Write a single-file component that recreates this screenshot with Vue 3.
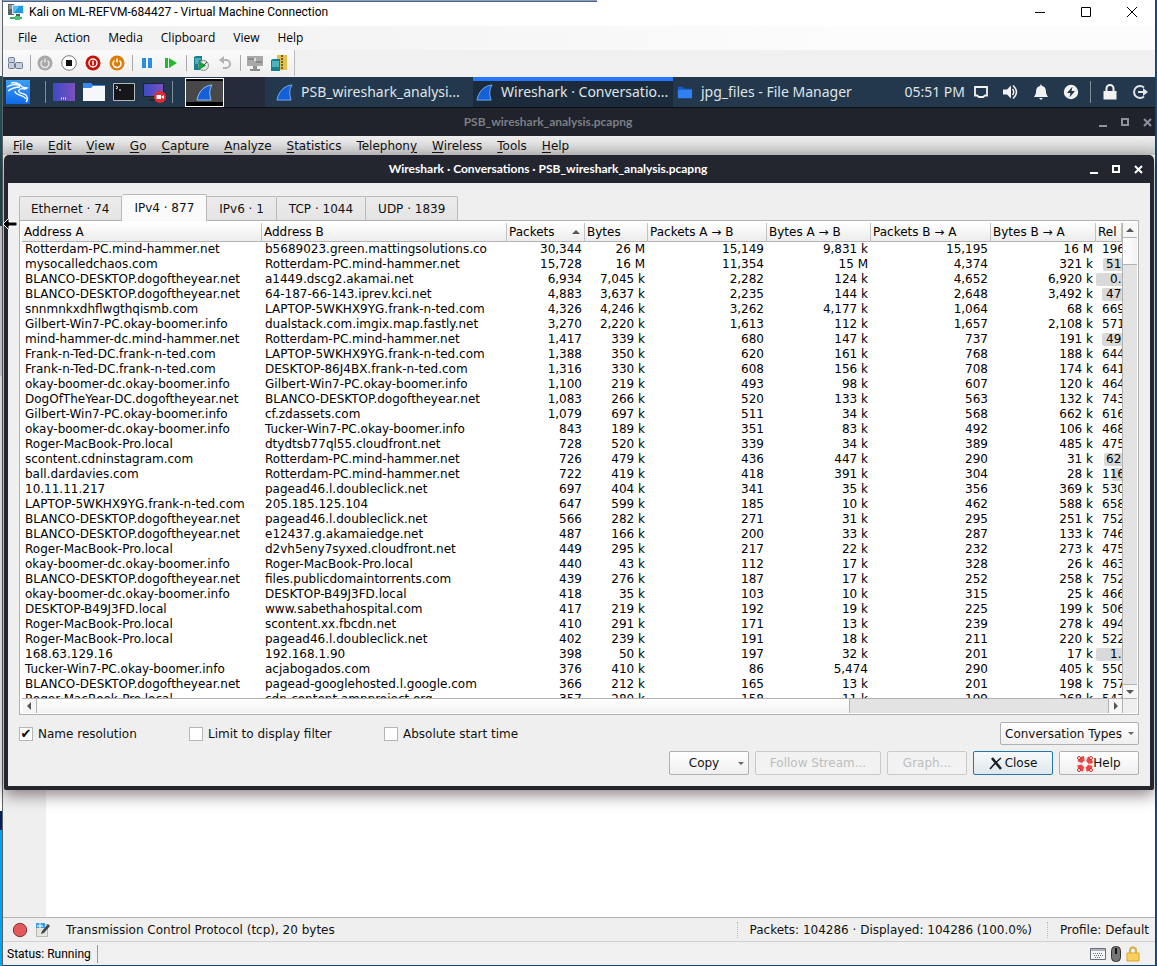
<script setup>
const winMenu = ['File', 'Action', 'Media', 'Clipboard', 'View', 'Help']
const appMenu = [
  ['', 'F', 'ile'], ['', 'E', 'dit'], ['', 'V', 'iew'], ['', 'G', 'o'], ['', 'C', 'apture'], ['', 'A', 'nalyze'],
  ['', 'S', 'tatistics'], ['Telephon', 'y', ''], ['', 'W', 'ireless'], ['', 'T', 'ools'], ['', 'H', 'elp'],
]
const tabs = ['Ethernet · 74', 'IPv4 · 877', 'IPv6 · 1', 'TCP · 1044', 'UDP · 1839']
const columns = ['Address A', 'Address B', 'Packets', 'Bytes', 'Packets A → B', 'Bytes A → B', 'Packets B → A', 'Bytes B → A', 'Rel Start']
const barStart = { '51': 7, '0.': 0, '47': 6, '49': 6, '62': 8, '116': 16, '1.': 0 }
const indent = (s) => 'c' + s.replace('.', '').length
const rows = `Rotterdam-PC.mind-hammer.net|b5689023.green.mattingsolutions.co|30,344|26 M|15,149|9,831 k|15,195|16 M|196
mysocalledchaos.com|Rotterdam-PC.mind-hammer.net|15,728|16 M|11,354|15 M|4,374|321 k|51
BLANCO-DESKTOP.dogoftheyear.net|a1449.dscg2.akamai.net|6,934|7,045 k|2,282|124 k|4,652|6,920 k|0.
BLANCO-DESKTOP.dogoftheyear.net|64-187-66-143.iprev.kci.net|4,883|3,637 k|2,235|144 k|2,648|3,492 k|47
snnmnkxdhflwgthqismb.com|LAPTOP-5WKHX9YG.frank-n-ted.com|4,326|4,246 k|3,262|4,177 k|1,064|68 k|669
Gilbert-Win7-PC.okay-boomer.info|dualstack.com.imgix.map.fastly.net|3,270|2,220 k|1,613|112 k|1,657|2,108 k|571
mind-hammer-dc.mind-hammer.net|Rotterdam-PC.mind-hammer.net|1,417|339 k|680|147 k|737|191 k|49
Frank-n-Ted-DC.frank-n-ted.com|LAPTOP-5WKHX9YG.frank-n-ted.com|1,388|350 k|620|161 k|768|188 k|644
Frank-n-Ted-DC.frank-n-ted.com|DESKTOP-86J4BX.frank-n-ted.com|1,316|330 k|608|156 k|708|174 k|641
okay-boomer-dc.okay-boomer.info|Gilbert-Win7-PC.okay-boomer.info|1,100|219 k|493|98 k|607|120 k|464
DogOfTheYear-DC.dogoftheyear.net|BLANCO-DESKTOP.dogoftheyear.net|1,083|266 k|520|133 k|563|132 k|743
Gilbert-Win7-PC.okay-boomer.info|cf.zdassets.com|1,079|697 k|511|34 k|568|662 k|616
okay-boomer-dc.okay-boomer.info|Tucker-Win7-PC.okay-boomer.info|843|189 k|351|83 k|492|106 k|468
Roger-MacBook-Pro.local|dtydtsb77ql55.cloudfront.net|728|520 k|339|34 k|389|485 k|475
scontent.cdninstagram.com|Rotterdam-PC.mind-hammer.net|726|479 k|436|447 k|290|31 k|62
ball.dardavies.com|Rotterdam-PC.mind-hammer.net|722|419 k|418|391 k|304|28 k|116
10.11.11.217|pagead46.l.doubleclick.net|697|404 k|341|35 k|356|369 k|530
LAPTOP-5WKHX9YG.frank-n-ted.com|205.185.125.104|647|599 k|185|10 k|462|588 k|658
BLANCO-DESKTOP.dogoftheyear.net|pagead46.l.doubleclick.net|566|282 k|271|31 k|295|251 k|752
BLANCO-DESKTOP.dogoftheyear.net|e12437.g.akamaiedge.net|487|166 k|200|33 k|287|133 k|746
Roger-MacBook-Pro.local|d2vh5eny7syxed.cloudfront.net|449|295 k|217|22 k|232|273 k|475
okay-boomer-dc.okay-boomer.info|Roger-MacBook-Pro.local|440|43 k|112|17 k|328|26 k|463
BLANCO-DESKTOP.dogoftheyear.net|files.publicdomaintorrents.com|439|276 k|187|17 k|252|258 k|752
okay-boomer-dc.okay-boomer.info|DESKTOP-B49J3FD.local|418|35 k|103|10 k|315|25 k|466
DESKTOP-B49J3FD.local|www.sabethahospital.com|417|219 k|192|19 k|225|199 k|506
Roger-MacBook-Pro.local|scontent.xx.fbcdn.net|410|291 k|171|13 k|239|278 k|494
Roger-MacBook-Pro.local|pagead46.l.doubleclick.net|402|239 k|191|18 k|211|220 k|522
168.63.129.16|192.168.1.90|398|50 k|197|32 k|201|17 k|1.
Tucker-Win7-PC.okay-boomer.info|acjabogados.com|376|410 k|86|5,474|290|405 k|550
BLANCO-DESKTOP.dogoftheyear.net|pagead-googlehosted.l.google.com|366|212 k|165|13 k|201|198 k|757
Roger-MacBook-Pro.local|cdn-content.ampproject.org|357|280 k|158|11 k|199|268 k|547`.split('\n').map((l) => l.split('|'))
</script>

<template>
  <div class="desktop">
    <div class="behind"><i class="b1"></i><i class="b0"></i><i class="b2"></i><i class="b3"></i><i class="b4"></i></div>
    <div class="vm">
      <header class="vm-title">
        <svg class="i16" viewBox="0 0 16 16"><path d="M0 0h6v11H0z" fill="#5a6268" /><path d="M1 2h4M1 4h4" stroke="#c3cbd0" /><path d="M4 1h12v9H4z" fill="#d5e8f2" /><path d="M5 2h10v7H5z" fill="#1d9be0" /><path d="M5 2h6L6 9H5z" fill="#56c1f5" /><path d="M8 10h4v3H8z" fill="#4d5a60" /><path d="M2 13h12v2H2z" fill="#33b05a" /><path d="M7 12h5v4H7z" fill="#4cc274" /></svg>
        <h1>Kali on ML-REFVM-684427 - Virtual Machine Connection</h1>
        <div class="vm-controls">
          <button aria-label="Minimize"><svg class="i12" viewBox="0 0 12 12"><path d="M1 6.500h10" stroke="#000" /></svg></button>
          <button aria-label="Maximize"><svg class="i12" viewBox="0 0 12 12"><path d="M1.500 1.500h9v9h-9z" fill="none" stroke="#000" /></svg></button>
          <button aria-label="Close window"><svg class="i12" viewBox="0 0 12 12"><path d="M1 1l10 10M11 1L1 11" stroke="#000" /></svg></button>
        </div>
      </header>
      <nav class="vm-menu"><button v-for="m in winMenu" :key="m">{{ m }}</button></nav>
      <div class="vm-tools">
        <div class="tools-strip">
          <button aria-label="Ctrl+Alt+Delete"><svg class="i16" viewBox="0 0 16 16"><g fill="#c6cfdd" stroke="#6d7b94"><rect x="1.500" y="2.500" width="6" height="5" rx="1" /><rect x="1.500" y="7.500" width="6" height="6" rx="1" /><rect x="8.500" y="7.500" width="7" height="6" rx="1" /></g></svg></button>
          <span class="tsep"></span>
          <button aria-label="Start"><svg class="i16" viewBox="0 0 16 16"><circle cx="8" cy="8" r="7.500" fill="#a8a8a8" /><path d="M5.500 5.500a4 4 0 1 0 5 0M8 3.500v4" fill="none" stroke="#e6e6e6" stroke-width="1.500" /></svg></button>
          <button aria-label="Turn off"><svg class="i16" viewBox="0 0 16 16"><circle cx="8" cy="8" r="7.300" fill="#fff" stroke="#777" /><path d="M5 5h6v6H5z" fill="#111" /></svg></button>
          <button aria-label="Shut down"><svg class="i16" viewBox="0 0 16 16"><circle cx="8" cy="8" r="7.500" fill="#c4120c" /><circle cx="8" cy="8" r="4" fill="none" stroke="#fff" stroke-width="1.400" /><path d="M8 5.800v4.400" stroke="#fff" stroke-width="1.500" /></svg></button>
          <button aria-label="Save"><svg class="i16" viewBox="0 0 16 16"><circle cx="8" cy="8" r="7.500" fill="#dc7d0a" /><path d="M5.500 5.500a4 4 0 1 0 5 0M8 3.500v4" fill="none" stroke="#fff" stroke-width="1.500" /></svg></button>
          <span class="tsep"></span>
          <button aria-label="Pause"><svg class="i16" viewBox="0 0 16 16"><path d="M3 3h4v10H3zM9 3h4v10H9z" fill="#2b8de0" /></svg></button>
          <button aria-label="Reset"><svg class="i16" viewBox="0 0 16 16"><path d="M2 3h3v10H2zM6 3l8 5-8 5z" fill="#1ebb2c" /></svg></button>
          <span class="tsep"></span>
          <button aria-label="Checkpoint"><svg class="i16" viewBox="0 0 16 16"><path d="M1 2l2-1h6v4L8 15H1z" fill="#177f8e" /><path d="M2 4h6M2 6h4M2 8h3" stroke="#8edbe4" /><circle cx="10.500" cy="10.500" r="5" fill="#e2e6e6" stroke="#848c8c" /><path d="M6 6l7 4.500L6 15z" fill="#14a53a" /><path d="M10 11l4-4" stroke="#444" /></svg></button>
          <button aria-label="Revert"><svg class="i16" viewBox="0 0 16 16"><path d="M4 5h5a4 4 0 0 1 0 8H6" fill="none" stroke="#b3b3b3" stroke-width="2" /><path d="M7 1v8L2 5z" fill="#b3b3b3" /></svg></button>
          <span class="tsep"></span>
          <button aria-label="Enhanced session"><svg class="i16" viewBox="0 0 16 16"><path d="M0 1h16v10H0z" fill="#a9a9a9" /><path d="M6 11h4v3H6z" fill="#929292" /><path d="M3 15h10M1 4h6M9 7h6" stroke="#8b8b8b" stroke-width="2" /><path d="M7 3h2v3H7z" fill="#dedede" /></svg></button>
          <button aria-label="Share"><svg class="i16" viewBox="0 0 16 16"><path d="M6 0h10v15H6z" fill="#e6c04c" /><path d="M11 0v15" stroke="#725d23" stroke-width="2" stroke-dasharray="2 1" /><path d="M0 5l2-1h7v12H0z" fill="#0f8192" /><path d="M1 7h7M1 9h7M1 11h7" stroke="#90e2ea" /></svg></button>
        </div>
      </div>

      <main class="guest">
        <div class="panel">
          <button class="kali" aria-label="Applications"><svg width="24" height="24" viewBox="0 0 24 24"><defs><linearGradient id="kg" x2="0" y2="1"><stop stop-color="#3aa0f8" /><stop offset="1" stop-color="#1168e8" /></linearGradient></defs><path d="M0 0h24v24H0z" fill="url(#kg)" /><path d="M1 7c5-3 9-3 13-1M2 11c4-3 8-4 12-4M5 3c6-1 9 1 11 4l5 1-2 1c-4-1-7 0-6 3 1 2 7 1 8 5 1 2 0 4-1 5M9 11c0 5 8 3 11 8" fill="none" stroke="#fff" stroke-width="1.300" /></svg></button>
          <span class="psep"></span>
          <div class="launch">
            <button aria-label="Show desktop"><svg class="i24" viewBox="0 0 24 24"><defs><linearGradient id="sg"><stop stop-color="#3c4bc4" /><stop offset="1" stop-color="#7d4fc0" /></linearGradient></defs><path d="M1 3h22v18H1z" fill="url(#sg)" /><path d="M9 18.500h6" stroke="#dfe3ff" stroke-dasharray="1 1" stroke-width="2" /></svg></button>
            <button aria-label="Files"><svg class="i24" viewBox="0 0 24 24"><path d="M1 3h8l2 2h12v6H1z" fill="#3b86ee" /><path d="M1 8h8l2-2h12v15H1z" fill="#f6f7f8" /></svg></button>
            <button aria-label="Terminal"><svg class="i24" viewBox="0 0 24 24"><path d="M1.500 3.500h21v17h-21z" fill="#15171a" stroke="#b5b8ba" /><path d="M4 6l2 1.500L4 9M7 10h2" fill="none" stroke="#fff" /></svg></button>
            <button aria-label="Recorder"><svg class="i24" viewBox="0 0 24 24"><path d="M1 3h21v14H1z" fill="#20242c" /><path d="M2 4h19v12H2z" fill="url(#sg)" /><path d="M7 19h9v2H7z" fill="#222831" /><circle cx="18" cy="17" r="6" fill="#e02c36" /><path d="M14.500 15h4.500v4h-4.500zM19 17l3-2v4z" fill="#fff" /></svg></button>
          </div>
          <span class="psep"></span>
          <button class="pager" aria-label="Workspace 1"><svg width="17" height="17" viewBox="0 0 18 18"><path d="M1 17C3 8 8 2 17 1c-3 5-3 10-1 16z" fill="#155fd8" stroke="#9dc6f5" /></svg></button>
          <div class="pager-rest"></div>
          <div class="tasks">
            <button class="task"><svg class="fin" viewBox="0 0 18 18"><path d="M1 17C3 8 8 2 17 1c-3 5-3 10-1 16z" fill="#155fd8" stroke="#76b0f2" /></svg><span>PSB_wireshark_analysi...</span></button>
            <button class="task active"><svg class="fin" viewBox="0 0 18 18"><path d="M1 17C3 8 8 2 17 1c-3 5-3 10-1 16z" fill="#155fd8" stroke="#76b0f2" /></svg><span>Wireshark · Conversatio...</span></button>
            <button class="task"><svg class="fin" viewBox="0 0 18 18"><path d="M2 3h5l2 2h8v10H2z" fill="#1558c8" /><path d="M2 6h15v9H2z" fill="#2f80f0" /></svg><span>jpg_files - File Manager</span></button>
          </div>
          <div class="tray">
            <time>05:51 PM</time>
            <svg class="i16" viewBox="0 0 16 16"><path d="M2 3h12v8.500h-2L10 13H6l-2-1.500H2z" fill="none" stroke="#f2f2f2" stroke-width="1.800" /></svg>
            <svg class="i16" viewBox="0 0 16 16"><path d="M0 5.500h4l4-4v13l-4-4H0z" fill="#f2f2f2" /><path d="M9.500 5q2.500 3 0 6M10 1.500q7 6.500 0 13" fill="none" stroke="#f2f2f2" stroke-width="1.500" /></svg>
            <svg class="i16" viewBox="0 0 16 16"><path d="M8 0l1 2c3 .5 4 3 4 6 0 2 1 3 2 5H1c1-2 2-3 2-5 0-3 1-5.500 4-6zM6 14h4l-2 2z" fill="#f2f2f2" /></svg>
            <svg class="i16" viewBox="0 0 16 16"><circle cx="8" cy="8" r="7.200" fill="#f2f2f2" /><path d="M9.500 2.500L4 9h3.500L6.500 13.500 12 7H8.500z" fill="#223447" /></svg>
            <span class="psep"></span>
            <svg class="i16" viewBox="0 0 16 16"><path d="M1.500 7h13v8.500h-13z" fill="#f2f2f2" /><path d="M4.500 8V4.500a3.500 3.500 0 0 1 7 0V8" fill="none" stroke="#f2f2f2" stroke-width="2" /></svg>
            <svg class="i16" viewBox="0 0 16 16"><path d="M12 3.500A6 6 0 1 0 12 12.500" fill="none" stroke="#e4e4e4" stroke-width="2" /><path d="M6 8h6" stroke="#e4e4e4" stroke-width="2" /><path d="M11 4l5 4-5 4z" fill="#e4e4e4" /></svg>
          </div>
        </div>

        <section class="app">
          <div class="titlebar dim"><h2>PSB_wireshark_analysis.pcapng</h2>
            <div class="wm"><button aria-label="Minimize capture"><svg class="i9" viewBox="0 0 9 9"><path d="M0 7h8v2H0z" /></svg></button><button aria-label="Maximize capture"><svg class="i9" viewBox="0 0 9 9"><path d="M0 0h8v8H0zM2 2v4h4V2z" fill-rule="evenodd" /></svg></button><button aria-label="Close capture"><svg class="i9" viewBox="0 0 9 9"><path d="M1 1l7 7M8 1L1 8" class="x" /></svg></button></div>
          </div>
          <nav class="app-menu"><button v-for="m in appMenu" :key="m.join('')">{{ m[0] }}<u>{{ m[1] }}</u>{{ m[2] }}</button></nav>
          <div class="app-body"><div class="gutter"></div><div class="bytes"></div></div>
          <footer class="app-status">
            <svg class="i16" viewBox="0 0 16 16"><circle cx="8" cy="8" r="6.700" fill="#e2595c" stroke="#863438" /></svg>
            <svg class="i16" viewBox="0 0 16 16"><path d="M1.500 2.500h11v12h-11z" fill="#e6e6df" stroke="#b9b9b0" /><path d="M1 1h9v5H1z" fill="#3da0dc" /><path d="M5 1v5M2 4h6" stroke="#fff" /><path d="M13 2L7 9l-1 3 3-1 6-7z" fill="#414950" /></svg>
            <span class="msg">Transmission Control Protocol (tcp), 20 bytes</span>
            <span class="cnt">Packets: 104286 · Displayed: 104286 (100.0%)</span>
            <span class="prof">Profile: Default</span>
          </footer>
        </section>

        <section class="dialog" role="dialog" aria-labelledby="dlg-title">
          <div class="titlebar"><h2 id="dlg-title">Wireshark · Conversations · PSB_wireshark_analysis.pcapng</h2>
            <div class="wm"><button aria-label="Minimize"><svg class="i9" viewBox="0 0 9 9"><path d="M0 7h8v2H0z" /></svg></button><button aria-label="Maximize"><svg class="i9" viewBox="0 0 9 9"><path d="M0 0h8v8H0zM2 2v4h4V2z" fill-rule="evenodd" /></svg></button><button aria-label="Close dialog"><svg class="i9" viewBox="0 0 9 9"><path d="M1 1l7 7M8 1L1 8" class="x" /></svg></button></div>
          </div>
          <div class="dialog-body">
            <div class="tabs" role="tablist"><button v-for="(t, i) in tabs" :key="t" role="tab" :aria-selected="i === 1" :class="{ on: i === 1 }">{{ t }}</button></div>
            <div class="frame">
              <div class="view">
                <table>
                  <colgroup><col v-for="(c, i) in columns" :key="c" :class="'w' + i" /></colgroup>
                  <thead><tr><th v-for="(c, i) in columns" :key="c" scope="col"><div>{{ c }}<svg v-if="i === 2" width="8" height="4" viewBox="0 0 8 4"><path d="M0 4L4 0l4 4z" fill="#555" /></svg></div></th></tr></thead>
                  <tbody>
                    <tr v-for="(r, n) in rows" :key="n">
                      <td v-for="c in 8" :key="c">{{ r[c - 1] }}</td>
                      <td class="rel" :class="indent(r[8])"><span v-if="r[8] in barStart" class="bar" :style="{ left: barStart[r[8]] + 'px' }"></span><span class="val">{{ r[8] }}</span></td>
                    </tr>
                  </tbody>
                </table>
              </div>
              <div class="vbar"><button aria-label="Scroll up"><svg width="8" height="4" viewBox="0 0 8 4"><path d="M0 4L4 0l4 4z" /></svg></button><div class="vthumb"></div><div class="track"></div><button aria-label="Scroll down"><svg width="8" height="4" viewBox="0 0 8 4"><path d="M0 0l4 4 4-4z" /></svg></button></div>
              <div class="hbar"><button aria-label="Scroll left"><svg width="4" height="8" viewBox="0 0 4 8"><path d="M4 0L0 4l4 4z" /></svg></button><div class="hthumb"></div><div class="track"></div><button aria-label="Scroll right"><svg width="4" height="8" viewBox="0 0 4 8"><path d="M0 0l4 4-4 4z" /></svg></button></div>
              <div class="corner"></div>
            </div>
            <div class="options">
              <label class="o1"><input type="checkbox" checked />Name resolution</label>
              <label class="o2"><input type="checkbox" />Limit to display filter</label>
              <label><input type="checkbox" />Absolute start time</label>
              <button class="btn types" aria-haspopup="menu">Conversation Types<svg width="6" height="4" viewBox="0 0 6 4"><path d="M0 0l3 3 3-3z" fill="#666" /></svg></button>
            </div>
            <div class="actions">
              <button class="btn copy" aria-haspopup="menu"><span>Copy</span><svg width="6" height="4" viewBox="0 0 6 4"><path d="M0 0l3 3 3-3z" fill="#666" /></svg></button>
              <button class="btn wide" disabled>Follow Stream...</button>
              <button class="btn" disabled>Graph...</button>
              <button class="btn primary"><svg width="14" height="14" viewBox="0 0 14 14"><path d="M3 1q4 5 9 11" fill="none" stroke="#1c2022" stroke-width="2.600" /><path d="M12 1Q6 6 1 12" fill="none" stroke="#1c2022" stroke-width="1.600" /></svg>Close</button>
              <button class="btn help"><svg class="i16" viewBox="0 0 16 16"><circle cx="8" cy="8" r="5" fill="none" stroke="#e9e2e2" stroke-width="4" /><circle cx="8" cy="8" r="5.500" fill="none" stroke="#ec4545" stroke-width="5" stroke-dasharray="5.640 3" stroke-dashoffset="-1.500" /><g fill="#fff" stroke="#c72b2b"><circle cx="2" cy="2" r="1.500" /><circle cx="14" cy="2" r="1.500" /><circle cx="2" cy="14" r="1.500" /><circle cx="14" cy="14" r="1.500" /></g></svg>Help</button>
            </div>
          </div>
        </section>
      </main>

      <footer class="vm-status">
        <span>Status: Running</span>
        <div class="vm-icons">
          <svg class="i16" viewBox="0 0 16 16"><path d="M.5 2.500h15v11H.5z" fill="#f4f6f8" stroke="#67717b" /><path d="M1 4h14" stroke="#67717b" /><path d="M3 7.500h10M4 9.500h10M5 11.500h6" stroke="#67717b" stroke-dasharray="1 1" /></svg>
          <svg class="mouse" viewBox="0 0 10 16"><rect x=".5" y=".5" width="9" height="15" rx="4" fill="#777" stroke="#333" /><path d="M5 2v6" stroke="#111" stroke-width="2" /></svg>
          <svg class="i14" viewBox="0 0 14 16"><path d="M4 8V4.500a3 3 0 0 1 6 0V8" fill="none" stroke="#d6b046" stroke-width="2" /><path d="M1 7h12v8H1z" fill="#fad05c" stroke="#d9a62d" /></svg>
        </div>
      </footer>
    </div>
    <div class="edge"></div>
    <svg class="pointer" viewBox="0 0 15 14"><path d="M1 7l6-6v4h8v4H7v4z" fill="#000" stroke="#fff" /></svg>
  </div>
</template>

<style>
html, body { margin: 0; overflow: hidden; }
</style>
<style scoped>
.desktop { position: relative; display: flex; height: 100vh; box-sizing: border-box; font: 12px/15px "DejaVu Sans", sans-serif; color: #111; background: #0c4a75; }
button { font: inherit; color: inherit; background: none; border: 0; padding: 0; margin: 0; }
svg { display: block; flex: none; }
.i9 { width: 9px; height: 9px; }
.i12 { width: 12px; height: 12px; }
.i14 { width: 14px; height: 16px; }
.i16 { width: 16px; height: 16px; }
.i24 { width: 24px; height: 24px; }
.behind { flex: none; width: 2px; display: flex; flex-direction: column; border-right: 1px solid #5b6064; }
.b1 { height: 76px; background: #eceef0; }
.b0 { height: 150px; background: #1f4c55; border-bottom: 150px solid #e2e4e6; }
.b2 { flex: 1; background: #fff; }
.b3 { height: 19px; background: #05205a; }
.b4 { height: 136px; background: #04a5ef; }
.vm { flex: 1; min-width: 0; display: flex; flex-direction: column; margin-bottom: 1px; background: #f0f0f0; }
.edge { flex: none; width: 1px; background: #0a4bb0; border-left: 1px solid #333c48; }
.vm-title { display: flex; align-items: center; box-sizing: border-box; gap: 5px; height: 26px; padding: 0 0 2px 5px; background: linear-gradient(#7ea1d4 50%, #5a6068 50%) 0 0 / 594px 2px no-repeat, #fff; }
.vm-title h1 { margin: 0; flex: 1; font: 12px/16px Roboto, "Open Sans", sans-serif; color: #000; }
.vm-controls { display: flex; gap: 34px; padding-right: 17px; }
.vm-menu { display: flex; gap: 18px; height: 24px; padding-left: 15px; align-items: center; background: linear-gradient(90deg, #f0f0f0, #fcfcfc 75%); font: 12px/16px "Open Sans", sans-serif; color: #000; }
.vm-tools { height: 27px; display: flex; }
.tools-strip { display: flex; align-items: center; gap: 8px; padding: 0 7px 0 4px; height: 26px; border-right: 1px solid #bbb; background: linear-gradient(#fbfbfb, #eee); }
.tsep { width: 1px; height: 16px; margin: 0 -2px 0 -1px; background: #aaa; }
.guest { position: relative; flex: 1; min-height: 0; display: flex; flex-direction: column; }
.panel { flex: none; display: flex; align-items: center; height: 30px; background: #24384d; border-bottom: 1px solid #0c0f14; color: #dfe4e8; font: 14px/20px "Noto Sans", "Open Sans", sans-serif; }
.kali { padding: 0 15px 0 3px; }
.psep { flex: none; width: 1px; height: 22px; background: #7f8d99; }
.launch { display: flex; gap: 6px; padding: 0 6px; }
.pager { box-sizing: border-box; display: flex; align-items: center; justify-content: center; width: 39px; height: 29px; margin-left: 12px; background: #484848; border: 1px solid #fff; box-shadow: inset 0 2px #000, inset 0 -4px #000; }
.pager-rest { width: 41px; align-self: stretch; background: #252b3a; }
.tasks { flex: 1; display: flex; align-self: stretch; padding-left: 8px; }
.task { flex: 0 0 200px; display: flex; align-items: center; gap: 8px; padding-left: 3px; white-space: nowrap; border-top: 4px solid transparent; border-bottom: 4px solid transparent; }
.task.active { background: #1c2b3b; border-top-color: #2777ff; border-bottom-color: #1c2b3b; }
.fin { width: 17px; height: 17px; }
.tray { display: flex; align-items: center; gap: 14px; padding-right: 7px; }
.tray time { margin-right: -6px; }
.tray .psep { margin: 0 -3px; }
.app { flex: 1; display: flex; flex-direction: column; min-height: 0; }
.titlebar { position: relative; display: flex; align-items: center; justify-content: center; height: 28px; padding-right: 62px; background: #23262f; color: #fff; fill: #fff; }
.titlebar h2 { margin: 0; font: bold 12px/16px Lato, "Noto Sans", sans-serif; }
.titlebar.dim { color: #7c7f84; fill: #909297; background: #20232c; }
.wm { position: absolute; right: 3px; top: 10px; display: flex; gap: 13px; }
.dialog .wm { right: 7px; }
.x { stroke: #fff; stroke-width: 2; }
.dim .x { stroke: #909297; }
.app-menu { display: flex; gap: 15px; height: 18px; padding: 1px 0 0 10px; background: linear-gradient(#efefef, #c9c9c9); }
.app-menu u { text-underline-offset: 2px; }
.app-body { flex: 1; display: flex; border-top: 0; border-bottom: 1px solid #b4b4b4; }
.gutter { width: 43px; background: #efefef; }
.bytes { flex: 1; background: #fff; }
.app-status { display: flex; align-items: center; box-sizing: border-box; height: 24px; padding: 1px 6px 0 9px; gap: 7px; border-bottom: 1px solid #d0d0d0; background: #efefef; }
.msg { flex: 1; padding: 1px 0 0 8px; }
.cnt, .prof { border-left: 1px dotted #bbb; padding: 1px 0 0 12px; }
.cnt { padding-right: 8px; }
.dialog { position: absolute; inset: 78px 1px 152px 1px; display: flex; flex-direction: column; box-sizing: border-box; padding: 0 4px 4px; border-radius: 5px 5px 2px 2px; background: #23262f; box-shadow: 0 5px 16px rgba(30, 10, 20, .5); }
.dialog-body { flex: 1; min-height: 0; display: flex; flex-direction: column; padding: 11px; background: #efefef; }
.tabs { display: flex; align-items: flex-end; }
.tabs button { box-sizing: border-box; height: 24px; padding: 1px 12px 0; border: 1px solid #b9b9b9; border-left-width: 0; border-bottom: 0; background: linear-gradient(#ececec, #e4e4e4); border-radius: 0 2px 0 0; }
.tabs button:first-child { padding-left: 11px; border-left-width: 1px; border-radius: 2px 0 0 0; }
.tabs button.on { height: 27px; margin-bottom: -1px; background: #fafafa; z-index: 1; border-radius: 2px 2px 0 0; }
.frame { flex: 1; min-height: 0; display: grid; grid-template: minmax(0, 1fr) 15px / minmax(0, 1fr) 15px; border: 1px solid #b2b2b2; padding: 2px 1px 1px 2px; background: #fff; }
.view { overflow: hidden; background: #fff; }
table { width: 100%; table-layout: fixed; border-collapse: separate; border-spacing: 0; color: #000; }
.w0 { width: 240px; } .w1 { width: 245px; } .w2 { width: 78px; } .w3 { width: 63px; } .w4 { width: 119px; } .w5 { width: 104px; } .w6 { width: 120px; } .w7 { width: 105px; }
th { height: 18px; padding: 0 0 0 2px; font-weight: normal; text-align: left; white-space: nowrap; overflow: hidden; border-right: 1px solid #c2c2c2; border-bottom: 1px solid #b4b4b4; background: linear-gradient(#fff, #ececec); }
th div { display: flex; align-items: center; justify-content: space-between; padding-right: 4px; }
td { height: 15px; padding: 0 3px; text-align: right; white-space: nowrap; }
td:nth-child(-n+2) { text-align: left; }
.rel { position: relative; overflow: hidden; text-align: left; }
.rel .val { position: relative; }
.c3 { padding-left: 6px; } .c2 { padding-left: 10px; } .c1 { padding-left: 14px; }
.bar { position: absolute; top: 1px; bottom: 1px; right: 0; background: #d9d9d9; border-radius: 2px 0 0 2px; }
.vbar { display: flex; flex-direction: column; border-left: 1px solid #b2b2b2; fill: #555; }
.vbar button, .hbar button { flex: none; display: flex; align-items: center; justify-content: center; background: #f6f6f6; }
.vbar button { height: 14px; }
.vthumb { height: 26px; border: solid #b2b2b2; border-width: 1px 0; background: linear-gradient(90deg, #fff, #f3f3f3); }
.track { flex: 1; background: #e3e3e3; }
.vbar button:last-child { border-top: 1px solid #b2b2b2; }
.hbar { display: flex; border-top: 1px solid #b2b2b2; fill: #555; }
.hbar button { width: 14px; }
.hthumb { flex: 0 0 74%; box-sizing: border-box; border: solid #b2b2b2; border-width: 0 1px; background: linear-gradient(#fff, #f3f3f3); }
.hbar button:last-child { border-left: 1px solid #b2b2b2; }
.corner { border: solid #b2b2b2; border-width: 1px 0 0 1px; background: #efefef; }
.options { display: flex; align-items: center; height: 23px; margin-top: 7px; line-height: 16px; }
.options label { display: flex; align-items: center; gap: 5px; padding-top: 1px; }
.o1, .o2 { box-sizing: border-box; }
.o1 { width: 170px; } .o2 { width: 195px; }
input { box-sizing: border-box; appearance: none; flex: none; width: 14px; height: 14px; margin: 0; border: 1px solid #b6b6b6; background: #fff; }
input:checked::after { content: "✔"; display: block; font: bold 13px/12px "DejaVu Sans", sans-serif; text-align: center; color: #000; }
.btn { display: flex; align-items: center; justify-content: center; box-sizing: border-box; width: 80px; height: 24px; padding-top: 1px; border: 1px solid #b0b0b0; border-radius: 2px; background: linear-gradient(#fff, #efefef); }
.types { width: 139px; height: 23px; margin-left: auto; gap: 6px; }
.actions { display: flex; justify-content: flex-end; gap: 6px; margin-top: 6px; }
.copy span { flex: 1; text-align: center; }
.copy { padding-right: 4px; }
.wide { width: 126px; }
.btn:disabled { color: #bebebe; border-color: #cacaca; background: #f2f2f2; }
.primary { border-color: #2477a8; background: linear-gradient(#f5f9fb, #dfe8ee); gap: 2px; }
.vm-status { display: flex; align-items: center; height: 23px; padding-left: 4px; font: 12px/16px Roboto, "Open Sans", sans-serif; color: #000; }
.vm-status span { padding: 1px 6px 1px 0; border-right: 1px solid #999; }
.vm-icons { display: flex; align-items: center; gap: 5px; margin-left: auto; padding-right: 15px; }
.mouse { width: 10px; height: 16px; }
.pointer { position: absolute; left: 2px; top: 217px; width: 15px; height: 14px; }
</style>
